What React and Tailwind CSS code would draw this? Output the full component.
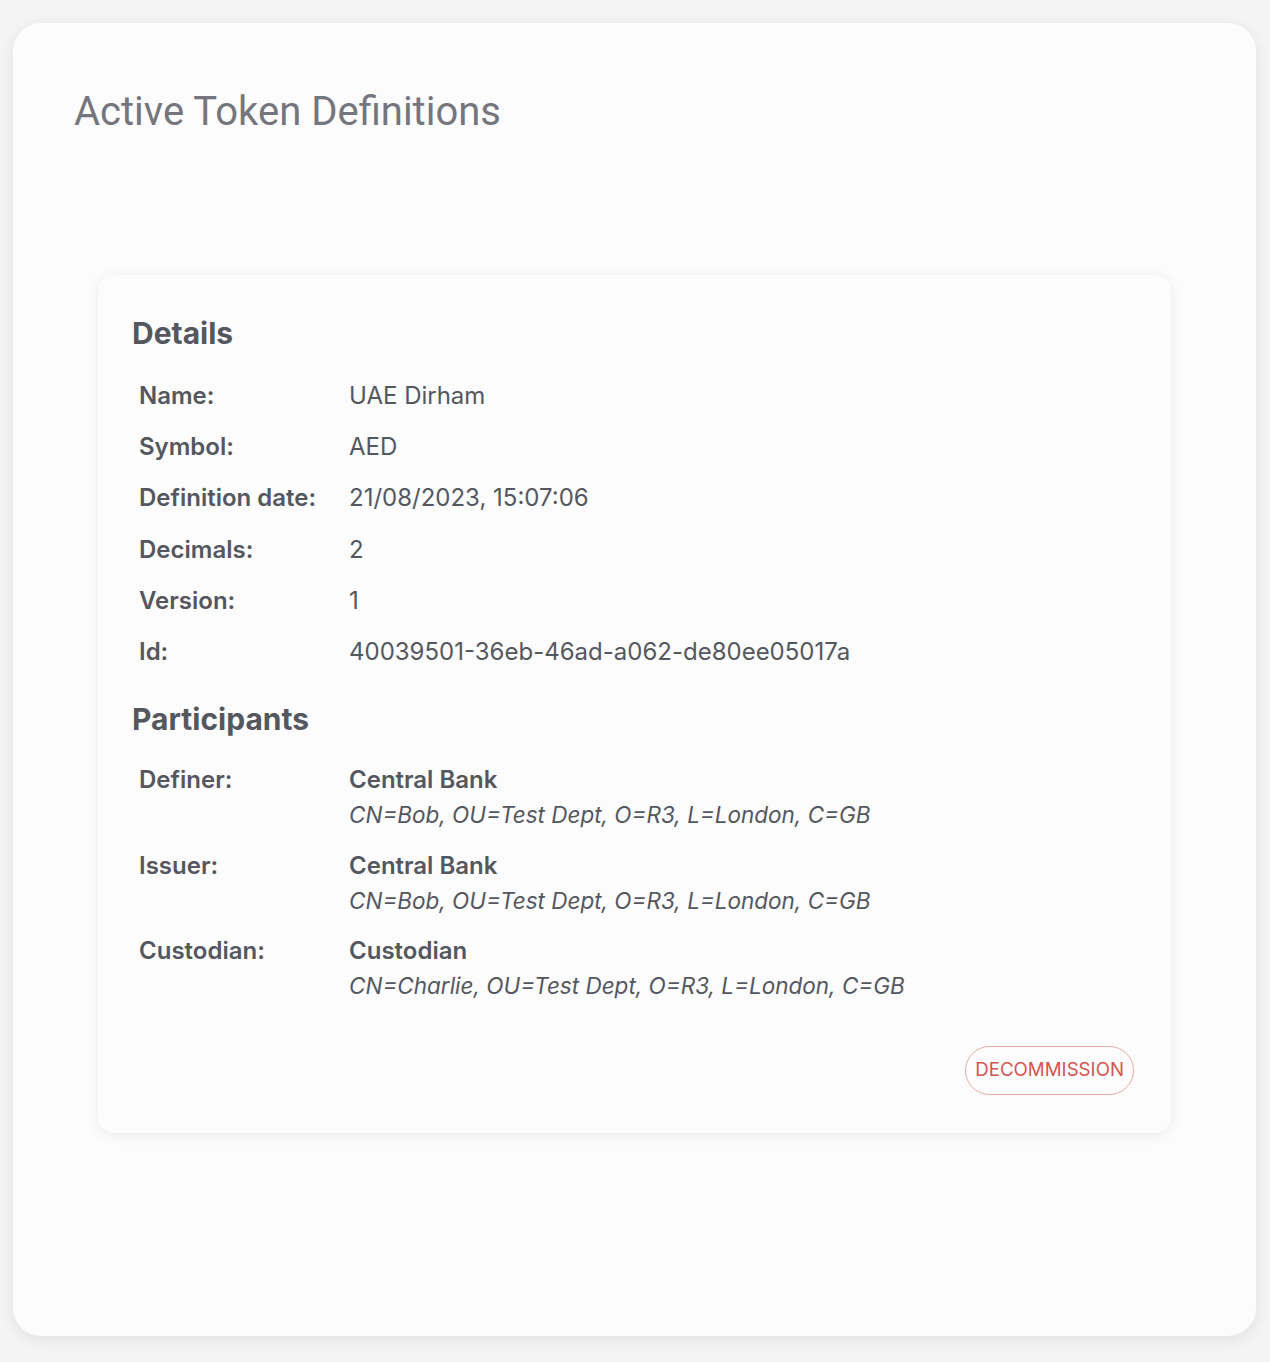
const details = [
  ['Name:', 'UAE Dirham'],
  ['Symbol:', 'AED'],
  ['Definition date:', '21/08/2023, 15:07:06'],
  ['Decimals:', '2'],
  ['Version:', '1'],
  ['Id:', '40039501-36eb-46ad-a062-de80ee05017a'],
]

const participants = [
  ['Definer:', 'Central Bank', 'CN=Bob, OU=Test Dept, O=R3, L=London, C=GB'],
  ['Issuer:', 'Central Bank', 'CN=Bob, OU=Test Dept, O=R3, L=London, C=GB'],
  ['Custodian:', 'Custodian', 'CN=Charlie, OU=Test Dept, O=R3, L=London, C=GB'],
]

function Heading({ children, className = '' }) {
  return (
    <h2 className={`text-[30px] leading-[36px] font-bold text-[#55575f] ${className}`}>
      {children}
    </h2>
  )
}

export default function App() {
  return (
    <div className="min-h-[1362px] bg-[#f4f4f4] pt-[23px] pb-[26px] pl-[13px] pr-[14px] font-['Inter',sans-serif]">
      <div className="h-[1313px] rounded-[28px] bg-[#fcfcfc] shadow-[0_4px_16px_rgba(0,0,0,0.08)] pt-[69px] px-[61px]">
        <h1 className="font-['Roboto',sans-serif] text-[40px] leading-[40px] font-normal text-[#75767d]">
          Active Token Definitions
        </h1>

        <div className="mt-[143px] mx-[24px] rounded-2xl bg-[#fcfcfc] shadow-[0_2px_14px_rgba(0,0,0,0.07)] pt-[40px] pb-[38px] pl-[34px] pr-[37px] text-[#55575f]">
          <Heading className="mb-[19px]">Details</Heading>
          <div>
            {details.map(([label, value]) => (
              <div key={label} className="flex h-[51.3px] items-center pl-[7px] text-[24px] leading-[32px]">
                <span className="w-[210px] shrink-0 font-semibold">{label}</span>
                <span>{value}</span>
              </div>
            ))}
          </div>

          <Heading className="mt-[23px] mb-[18px]">Participants</Heading>
          <div>
            {participants.map(([label, name, dn]) => (
              <div key={label} className="flex py-[9.65px] pl-[7px] text-[24px] leading-[32px]">
                <span className="w-[210px] shrink-0 font-semibold">{label}</span>
                <div className="flex flex-col gap-[4px]">
                  <span className="font-semibold">{name}</span>
                  <span className="text-[22.5px] leading-[30px] italic">{dn}</span>
                </div>
              </div>
            ))}
          </div>

          <div className="mt-[35px] flex justify-end">
            <button className="h-[49px] rounded-full border border-[#e6aaa6] px-[9px] text-[18.7px] uppercase text-[#d3564f]">
              Decommission
            </button>
          </div>
        </div>
      </div>
    </div>
  )
}
